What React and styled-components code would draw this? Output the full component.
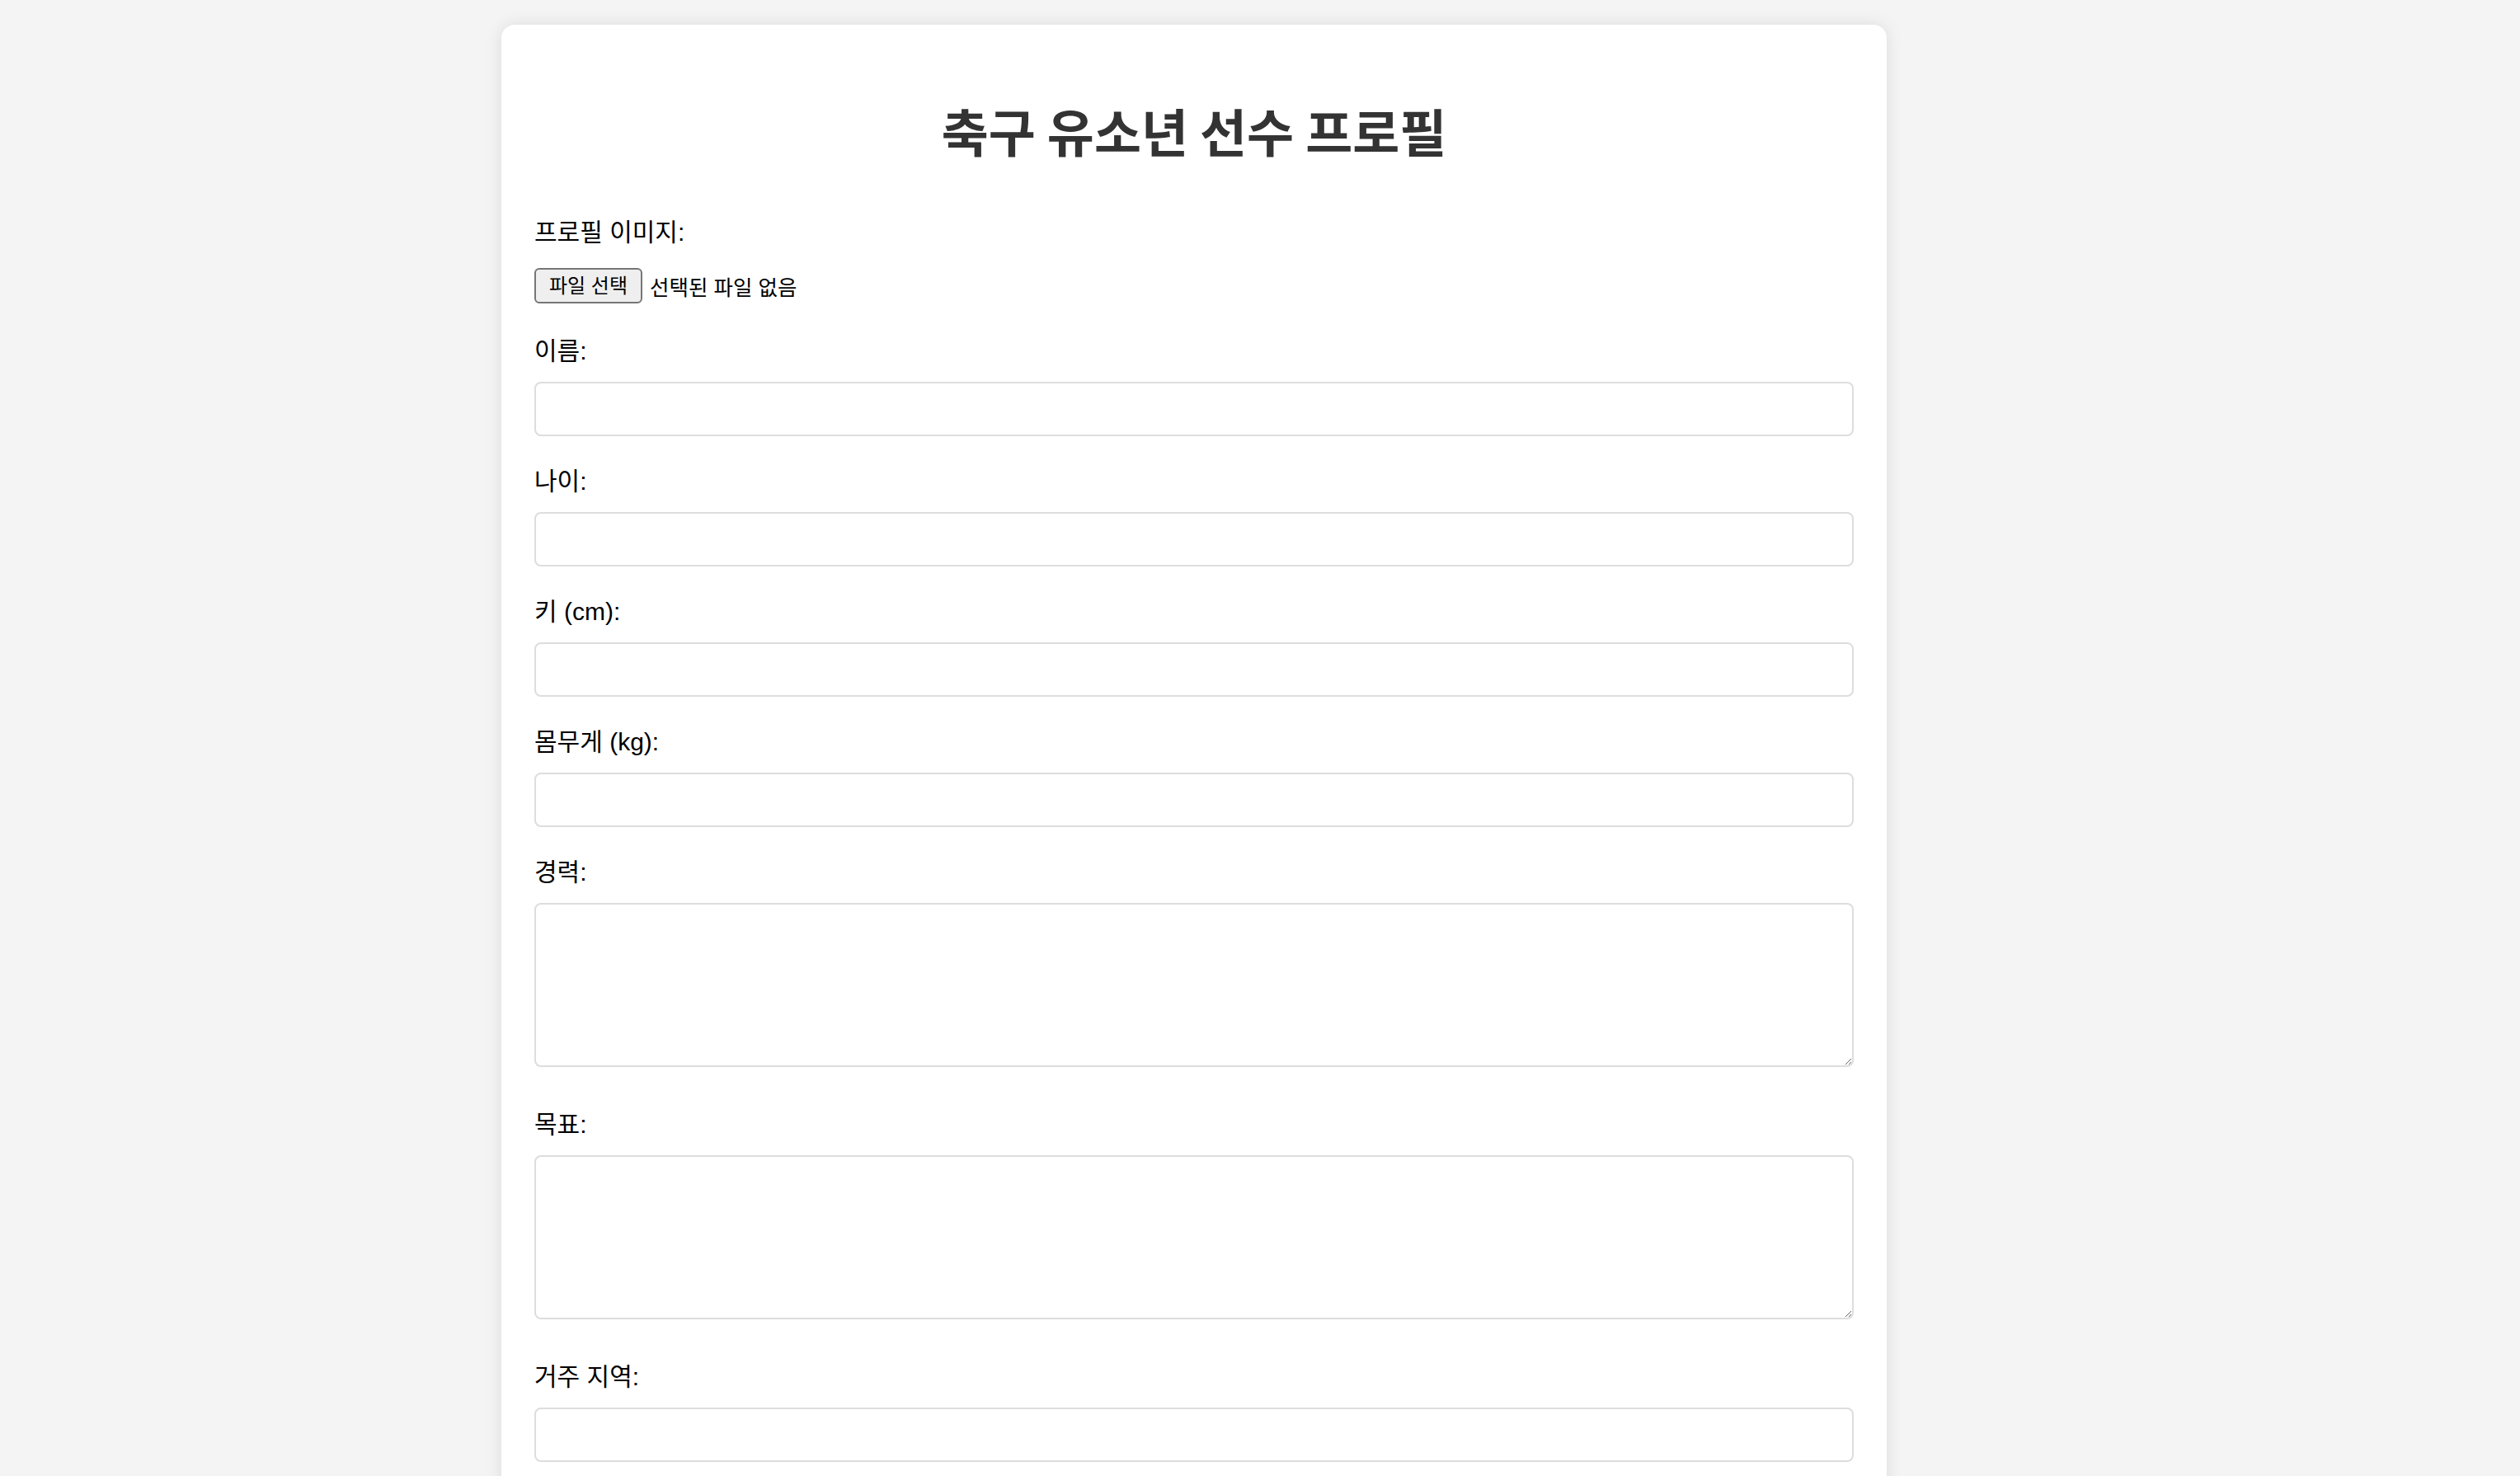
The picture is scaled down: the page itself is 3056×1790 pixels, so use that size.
import React from "react";
import styled, { createGlobalStyle } from "styled-components";

const GlobalStyle = createGlobalStyle`
  html, body {
    margin: 0;
    padding: 0;
    background: #f4f4f4;
  }
  * { box-sizing: border-box; }
`;

const Page = styled.div`
  width: 2896px;
  padding-top: 30px;
  display: flex;
  justify-content: center;
  font-family: "Liberation Sans", "Noto Sans CJK KR", sans-serif;
`;

const Card = styled.div`
  width: 1680px;
  background: #ffffff;
  border-radius: 16px;
  padding: 40px 40px 60px;
  box-shadow: 0 0 20px rgba(0, 0, 0, 0.1);
`;

const Title = styled.h1`
  margin: 48px 0 65px;
  text-align: center;
  color: #333333;
  font-family: "Noto Sans CJK KR", "Liberation Sans", sans-serif;
  font-weight: 700;
  font-size: 62px;
  line-height: 80px;
`;

const Group = styled.div`
  padding-bottom: ${(p) => p.$gap || 36}px;
`;

const Label = styled.label`
  display: block;
  font-size: 30px;
  line-height: 38px;
  color: #000000;
  margin-bottom: 18px;
`;

const FileRow = styled.div`
  display: flex;
  align-items: center;
  gap: 9px;
  margin-top: -2px;
  padding-top: 8px;
`;

const FileButton = styled.button`
  height: 43px;
  padding: 0 16px;
  border: 2px solid #767676;
  border-radius: 6px;
  background: #efefef;
  color: #000000;
  font-family: "Liberation Sans", "Noto Sans CJK KR", sans-serif;
  font-size: 24px;
  line-height: 1;
`;

const FileText = styled.span`
  font-size: 25.5px;
  color: #000000;
`;

const TextInput = styled.input`
  display: block;
  width: 100%;
  height: 66px;
  padding: 16px;
  border: 2px solid #dddddd;
  border-radius: 8px;
  font-size: 26.67px;
  font-family: "Liberation Sans", "Noto Sans CJK KR", sans-serif;
  background: #ffffff;
  outline: none;
`;

const TextArea = styled.textarea`
  display: block;
  width: 100%;
  height: 199px;
  padding: 16px;
  border: 2px solid #dddddd;
  border-radius: 8px;
  font-size: 26.67px;
  font-family: "Liberation Sans", "Noto Sans CJK KR", sans-serif;
  outline: none;
`;

const fields = [
  { id: "name", label: "이름:", type: "input" },
  { id: "age", label: "나이:", type: "input" },
  { id: "height", label: "키 (cm):", type: "input" },
  { id: "weight", label: "몸무게 (kg):", type: "input" },
  { id: "career", label: "경력:", type: "textarea" },
  { id: "goal", label: "목표:", type: "textarea" },
  { id: "region", label: "거주 지역:", type: "input" },
];

export default function App() {
  return (
    <>
      <GlobalStyle />
      <Page>
        <Card>
          <Title>축구 유소년 선수 프로필</Title>
          <Group $gap={39}>
            <Label>프로필 이미지:</Label>
            <FileRow>
              <FileButton type="button">파일 선택</FileButton>
              <FileText>선택된 파일 없음</FileText>
            </FileRow>
          </Group>
          {fields.map((f) => (
            <Group key={f.id} $gap={f.type === "textarea" ? 51 : 36}>
              <Label htmlFor={f.id}>{f.label}</Label>
              {f.type === "input" ? (
                <TextInput id={f.id} type="text" />
              ) : (
                <TextArea id={f.id} />
              )}
            </Group>
          ))}
        </Card>
      </Page>
    </>
  );
}
